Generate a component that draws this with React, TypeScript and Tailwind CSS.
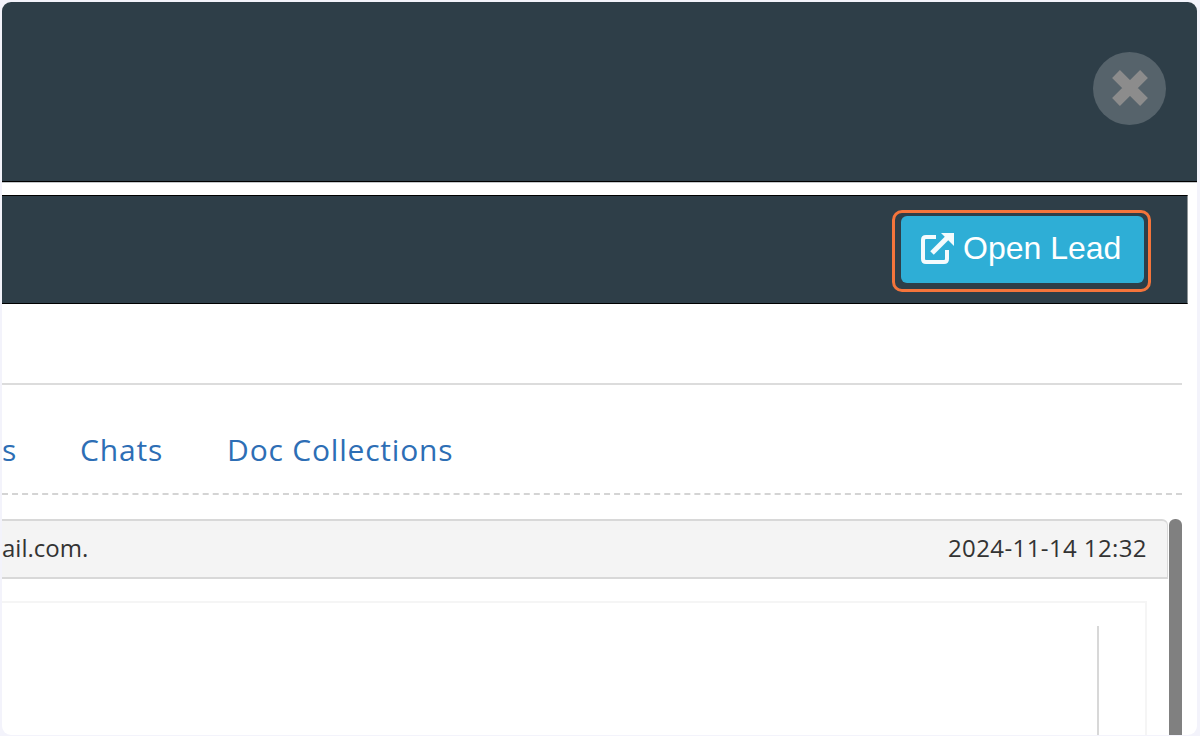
export default function App() {
  return (
    <div className="h-[736px] w-[1200px] overflow-hidden bg-[#f3f3fb] pl-[2px] pt-[2px] pr-[3px] pb-px font-['Open_Sans',sans-serif]">
      <div className="flex h-full flex-col overflow-hidden rounded-[9px] bg-white">
        <header className="flex h-[180px] shrink-0 items-center justify-end border-b border-black bg-[#2e3e48] pb-[7px] pr-[31px]">
          <div className="flex h-[73px] w-[73px] items-center justify-center rounded-full bg-[#56636b]">
            <svg width="46" height="46" viewBox="0 0 46 46">
              <path d="M9 9 L37 37 M37 9 L9 37" stroke="#8c8c8c" strokeWidth="11" strokeLinecap="butt" />
            </svg>
          </div>
        </header>
        <div className="border-t border-[#c4c8cb] pt-[12px] pr-[9px]">
          <div className="flex h-[109px] items-center justify-end border-y border-r border-black border-r-[#8f9598] bg-[#2e3e48] pt-[2px] pr-[36px]">
            <div className="rounded-[10px] border-[3px] border-[#f4743b] pl-[6px] pr-[4px] pt-[3px] pb-[6px]">
              <button className="flex h-[67px] w-[243px] items-center rounded-[6px] bg-[#2eaed6] pb-[3px] pl-[19px] font-['Liberation_Sans',sans-serif] text-[32px] text-white">
                <svg width="36" height="34" viewBox="0 0 36 34" className="mr-[7px]" fill="none" stroke="#f4fbfd" strokeWidth="4">
                  <path d="M16 6 H6 Q3 6 3 9 V28 Q3 31 6 31 H24 Q27 31 27 28 V19" />
                  <path d="M12 22 L29 5" strokeWidth="5" />
                  <path d="M21 2 H34 V15 Z" fill="#f4fbfd" stroke="none" />
                </svg>
                Open Lead
              </button>
            </div>
          </div>
        </div>
        <div className="mt-[79px] mr-[15px] h-[2px] bg-[#dcdcdc]" />
        <nav className="mr-[15px] flex h-[110px] items-center justify-start overflow-hidden whitespace-nowrap border-b-2 border-dashed border-[#d4d4d4] pt-[20px] text-[30px] tracking-[0.8px] text-[#2d6eb5]">
          <span>s</span>
          <span className="ml-[63px]">Chats</span>
          <span className="ml-[64px]">Doc Collections</span>
        </nav>
        <div className="mt-[24px] flex min-h-0 flex-1 pr-[15px]">
          <div className="flex-1">
            <div className="flex h-[60px] items-center justify-between rounded-tr-[6px] border-y-2 border-r border-[#d8d8d8] bg-[#f4f4f4] pb-[3px] pr-[20px] text-[24px] text-[#333333]">
              <span>ail.com.</span>
              <span className="tracking-[0.4px]">2024-11-14 12:32</span>
            </div>
            <div className="mt-[22px] mr-[21px] h-[200px] border-t-2 border-r-2 border-[#f5f5f5] pt-[23px] pr-[46px]">
              <div className="ml-auto h-full w-[2px] bg-[#d8d8d8]" />
            </div>
          </div>
          <div className="ml-px w-[13px] rounded-t-[6px] bg-[#808080]" />
        </div>
      </div>
    </div>
  );
}
